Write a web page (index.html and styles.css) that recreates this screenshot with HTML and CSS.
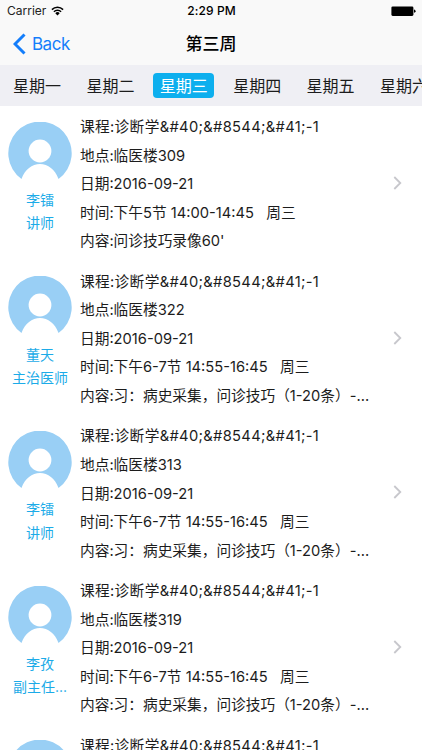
FILE: index.html
```
<!DOCTYPE html>
<html lang="zh-CN">
<head>
<meta charset="UTF-8">
<meta name="viewport" content="width=device-width, initial-scale=1.0">
<title>第三周</title>
<link rel="stylesheet" href="styles.css">
</head>

<body>

<!-- shared icons -->
<svg class="defs" width="0" height="0">
<symbol id="avatar" viewBox="0 0 64 58">
<path fill="#99cff5" d="M13.500 57A31.700 31.700 0 1 1 50.500 57C47 47.500 40 42.100 32 42.100C24 42.100 17 47.500 13.500 57Z"/>
<circle cx="32" cy="29" r="11.400" fill="#fff"/>
</symbol>
<symbol id="arrow" viewBox="0 0 9 14">
<path d="M1.300 1L7.300 7L1.300 13" fill="none" stroke="#c7c7cc" stroke-width="1.800"/>
</symbol>
</svg>

<header>
<div class="status">
<span class="carrier">Carrier
<svg width="13" height="10" viewBox="0 0 13 10">
<path d="M0.900 3.600A8 8 0 0 1 12.100 3.600M2.900 5.700A5.100 5.100 0 0 1 10.100 5.700" fill="none" stroke="#000" stroke-width="1.500"/>
<path d="M6.500 9.500L4.300 7.200A3.100 3.100 0 0 1 8.700 7.200Z"/>
</svg>
</span>
<span class="time">2:29 PM</span>
<svg class="battery" width="25" height="11" viewBox="0 0 25 11">
<rect x="0.400" y="0.500" width="22" height="9.400" rx="1.300"/>
<path d="M23 3.600Q24.600 3.900 24.600 5.200Q24.600 6.500 23 6.800Z"/>
</svg>
</div>
<div class="nav">
<a class="back">
<svg width="13" height="22" viewBox="0 0 13 22"><path d="M11.500 1.500L2 11L11.500 20.500" fill="none" stroke="#147efb" stroke-width="3"/></svg>
Back</a>
<h1>第三周</h1>
</div>
</header>

<div class="tabs">
<span class="tab">星期一</span>
<span class="tab">星期二</span>
<span class="tab active">星期三</span>
<span class="tab">星期四</span>
<span class="tab">星期五</span>
<span class="tab">星期六</span>
</div>

<div class="list">

<div class="row">
<div class="teacher">
<svg class="avatar"><use href="#avatar"/></svg>
<p>李镭</p>
<p>讲师</p>
</div>
<div class="info">
<p class="course">课程:诊断学&amp;#40;&amp;#8544;&amp;#41;-1</p>
<p>地点:临医楼309</p>
<p>日期:2016-09-21</p>
<p>时间:下午5节 14:00-14:45 &nbsp; 周三</p>
<p>内容:问诊技巧录像60'</p>
</div>
<svg class="arrow"><use href="#arrow"/></svg>
</div>

<div class="row">
<div class="teacher">
<svg class="avatar"><use href="#avatar"/></svg>
<p>董天</p>
<p>主治医师</p>
</div>
<div class="info">
<p class="course">课程:诊断学&amp;#40;&amp;#8544;&amp;#41;-1</p>
<p>地点:临医楼322</p>
<p>日期:2016-09-21</p>
<p>时间:下午6-7节 14:55-16:45 &nbsp; 周三</p>
<p>内容:习：病史采集，问诊技巧（1-20条）-...</p>
</div>
<svg class="arrow"><use href="#arrow"/></svg>
</div>

<div class="row">
<div class="teacher">
<svg class="avatar"><use href="#avatar"/></svg>
<p>李镭</p>
<p>讲师</p>
</div>
<div class="info">
<p class="course">课程:诊断学&amp;#40;&amp;#8544;&amp;#41;-1</p>
<p>地点:临医楼313</p>
<p>日期:2016-09-21</p>
<p>时间:下午6-7节 14:55-16:45 &nbsp; 周三</p>
<p>内容:习：病史采集，问诊技巧（1-20条）-...</p>
</div>
<svg class="arrow"><use href="#arrow"/></svg>
</div>

<div class="row">
<div class="teacher">
<svg class="avatar"><use href="#avatar"/></svg>
<p>李孜</p>
<p>副主任...</p>
</div>
<div class="info">
<p class="course">课程:诊断学&amp;#40;&amp;#8544;&amp;#41;-1</p>
<p>地点:临医楼319</p>
<p>日期:2016-09-21</p>
<p>时间:下午6-7节 14:55-16:45 &nbsp; 周三</p>
<p>内容:习：病史采集，问诊技巧（1-20条）-...</p>
</div>
<svg class="arrow"><use href="#arrow"/></svg>
</div>

<div class="row">
<div class="teacher">
<svg class="avatar"><use href="#avatar"/></svg>
</div>
<div class="info">
<p class="course">课程:诊断学&amp;#40;&amp;#8544;&amp;#41;-1</p>
</div>
</div>

</div>

</body>
</html>
```
FILE: styles.css
```
*{box-sizing:border-box;}

body{
    font-family:Inter,"Noto Sans CJK SC",sans-serif;
    background:#fff;
    color:#1c1c1c;
    margin:0;
    height:750px;
    display:flex;
    flex-direction:column;
    overflow:hidden;
}

p,h1{margin:0;}
svg{display:block;flex:none;}
.defs{position:absolute;}

/* Header */
header{
    flex:none;
    height:65px;
    background:#f9f9f9;
}

.status{
    display:grid;
    grid-template-columns:1fr auto 1fr;
    align-items:center;
    height:22px;
    padding:0 6px 0 7px;
    font-size:12px;
    line-height:22px;
    color:#000;
}

.carrier{
    display:flex;
    align-items:center;
    gap:5px;
    color:#222;
}

.time{
    font-weight:500;
    letter-spacing:0.1px;
}

.battery{justify-self:end;}

.nav{
    display:grid;
    grid-template-columns:1fr auto 1fr;
    align-items:center;
    height:43px;
    padding:0 13px;
}

.back{
    display:flex;
    align-items:center;
    gap:6px;
    font-size:17px;
    letter-spacing:-0.5px;
    color:#147efb;
}

h1{
    font-size:17px;
    font-weight:500;
    line-height:24px;
    color:#000;
}

/* Weekday tabs */
.tabs{
    flex:none;
    display:flex;
    align-items:center;
    gap:12.4px;
    height:41px;
    padding-left:6.5px;
    background:#efeff4;
    overflow:hidden;
}

.tab{
    flex:none;
    width:61px;
    height:25px;
    line-height:26px;
    font-size:16px;
    text-align:center;
    border-radius:4px;
}

.tab.active{
    background:#0dafee;
    color:#fff;
}

/* Course list */
.list{
    flex:1;
    min-height:0;
    overflow:hidden;
}

.row{
    display:flex;
    height:154.7px;
    padding:7px 20px 0 8px;
}

.teacher{
    width:64px;
    padding-top:8.5px;
    text-align:center;
    font-size:14px;
    line-height:23.3px;
    color:#1cabe8;
    white-space:nowrap;
}

.avatar{
    width:64px;
    height:58px;
    margin-bottom:8.5px;
}

.info{
    flex:1;
    margin-left:8px;
    font-size:14.7px;
    line-height:28.6px;
    white-space:nowrap;
}

.course{letter-spacing:0.33px;}

.arrow{
    width:9px;
    height:14px;
    margin-top:63px;
}
```
